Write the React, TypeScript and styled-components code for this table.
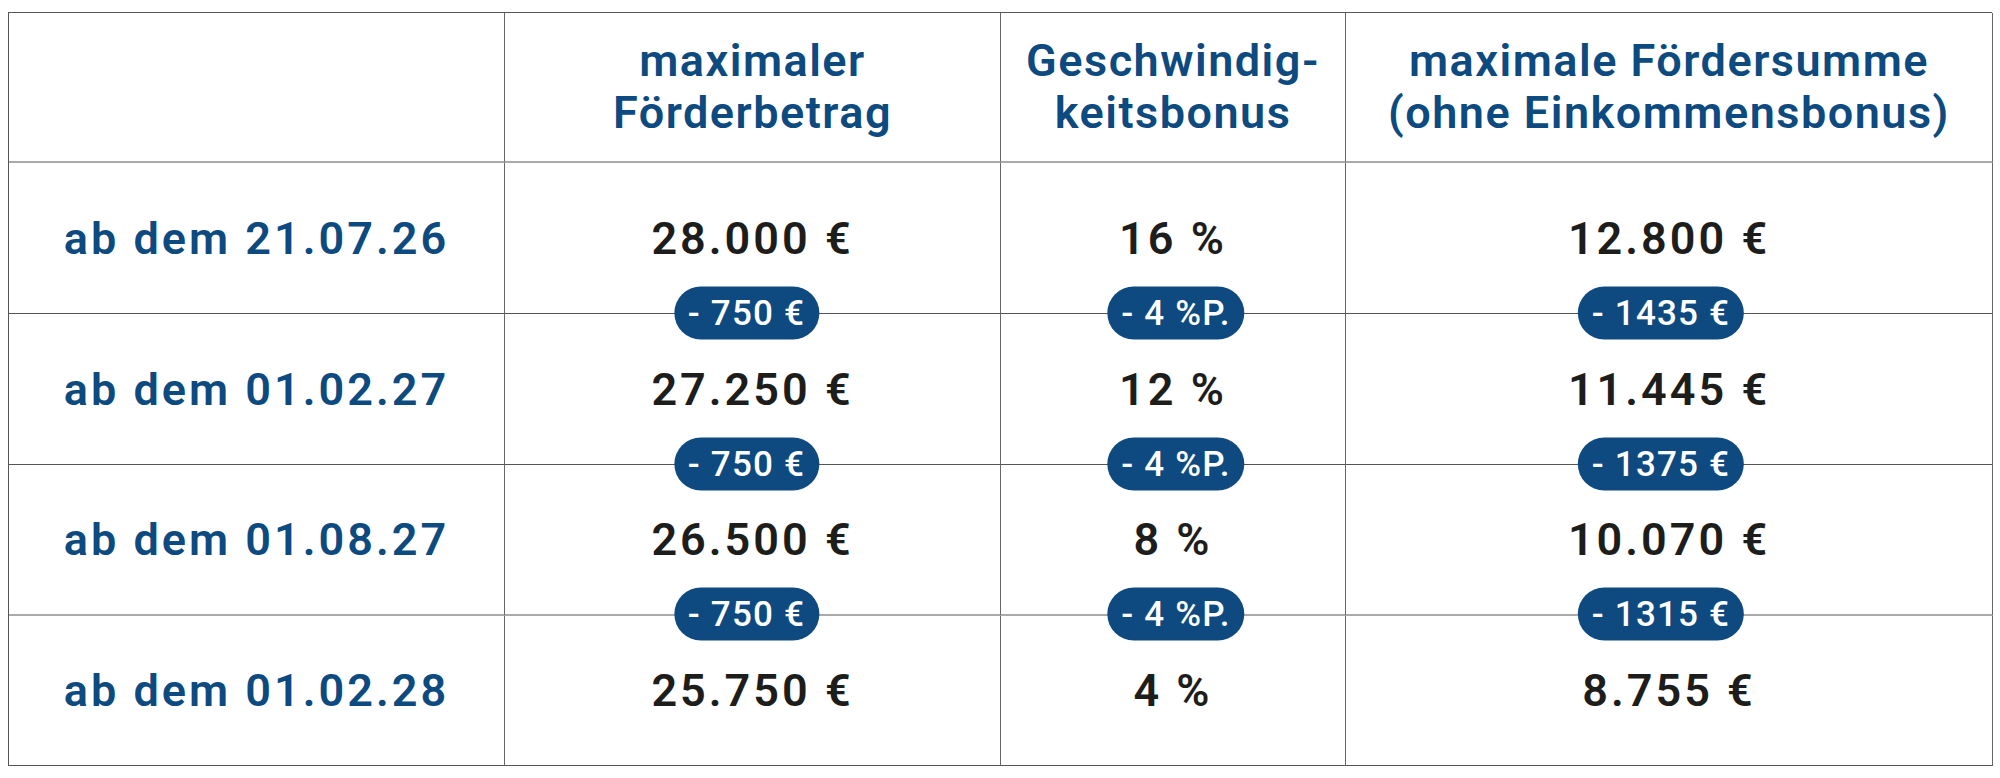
import React, { Fragment } from "react";
import styled, { createGlobalStyle } from "styled-components";

const GlobalStyle = createGlobalStyle`
  html, body {
    margin: 0;
    padding: 0;
    background: #ffffff;
  }
  body {
    font-family: Roboto, "Noto Sans", sans-serif;
  }
`;

const Page = styled.div`
  padding: 12px 8px;
`;

const Table = styled.div`
  display: grid;
  grid-template-columns: 496px 496px 345px 647px;
  border-top: 1px solid #555;
  border-left: 1px solid #555;
  width: 1984px;
  box-sizing: border-box;
`;

const Cell = styled.div<{ $height: number; $line: string; $lineWidth: number }>`
  position: relative;
  box-sizing: border-box;
  height: ${(p) => p.$height}px;
  display: flex;
  align-items: center;
  justify-content: center;
  text-align: center;
  border-right: 1px solid #666;
  border-bottom: ${(p) => p.$lineWidth}px solid ${(p) => p.$line};
`;

const HeadText = styled.div`
  font-size: 45px;
  font-weight: 600;
  line-height: 52px;
  color: #0c4a80;
  letter-spacing: 1.5px;
`;

const DateText = styled.div`
  font-size: 45px;
  font-weight: 600;
  color: #0c4a80;
  letter-spacing: 3px;
`;

const Value = styled.div`
  font-size: 45px;
  font-weight: 600;
  color: #1d1d1b;
  letter-spacing: 3px;
`;

const Badge = styled.div<{ $shift: number }>`
  position: absolute;
  left: 50%;
  bottom: 0;
  transform: translate(calc(-50% + ${(p) => p.$shift}px), 50%);
  z-index: 2;
  height: 53px;
  padding: 0 14px;
  border-radius: 27px;
  background: #0e4a80;
  color: #ffffff;
  font-size: 35px;
  font-weight: 500;
  letter-spacing: 1.2px;
  display: flex;
  align-items: center;
  white-space: nowrap;
`;

type Row = {
  date: string;
  values: [string, string, string];
  badges?: [string, string, string];
};

const rows: Row[] = [
  { date: "ab dem 21.07.26", values: ["28.000 €", "16 %", "12.800 €"], badges: ["- 750 €", "- 4 %P.", "- 1435 €"] },
  { date: "ab dem 01.02.27", values: ["27.250 €", "12 %", "11.445 €"], badges: ["- 750 €", "- 4 %P.", "- 1375 €"] },
  { date: "ab dem 01.08.27", values: ["26.500 €", "8 %", "10.070 €"], badges: ["- 750 €", "- 4 %P.", "- 1315 €"] },
  { date: "ab dem 01.02.28", values: ["25.750 €", "4 %", "8.755 €"] },
];

const lines = [
  { height: 151, color: "#555", width: 1 },
  { height: 151, color: "#555", width: 1 },
  { height: 151, color: "#aaa", width: 2 },
  { height: 150, color: "#555", width: 1 },
];

const shifts = [-6, 3, -8];

const App = () => (
  <Page>
    <GlobalStyle />
    <Table>
      <Cell $height={150} $line="#aaa" $lineWidth={2} />
      <Cell $height={150} $line="#aaa" $lineWidth={2}>
        <HeadText>
          maximaler
          <br />
          Förderbetrag
        </HeadText>
      </Cell>
      <Cell $height={150} $line="#aaa" $lineWidth={2}>
        <HeadText>
          Geschwindig-
          <br />
          keitsbonus
        </HeadText>
      </Cell>
      <Cell $height={150} $line="#aaa" $lineWidth={2}>
        <HeadText>
          maximale Fördersumme
          <br />
          (ohne Einkommensbonus)
        </HeadText>
      </Cell>
      {rows.map((row, i) => (
        <Fragment key={row.date}>
          <Cell $height={lines[i].height} $line={lines[i].color} $lineWidth={lines[i].width}>
            <DateText>{row.date}</DateText>
          </Cell>
          {row.values.map((value, j) => (
            <Cell key={j} $height={lines[i].height} $line={lines[i].color} $lineWidth={lines[i].width}>
              <Value>{value}</Value>
              {row.badges && <Badge $shift={shifts[j]}>{row.badges[j]}</Badge>}
            </Cell>
          ))}
        </Fragment>
      ))}
    </Table>
  </Page>
);

export default App;
